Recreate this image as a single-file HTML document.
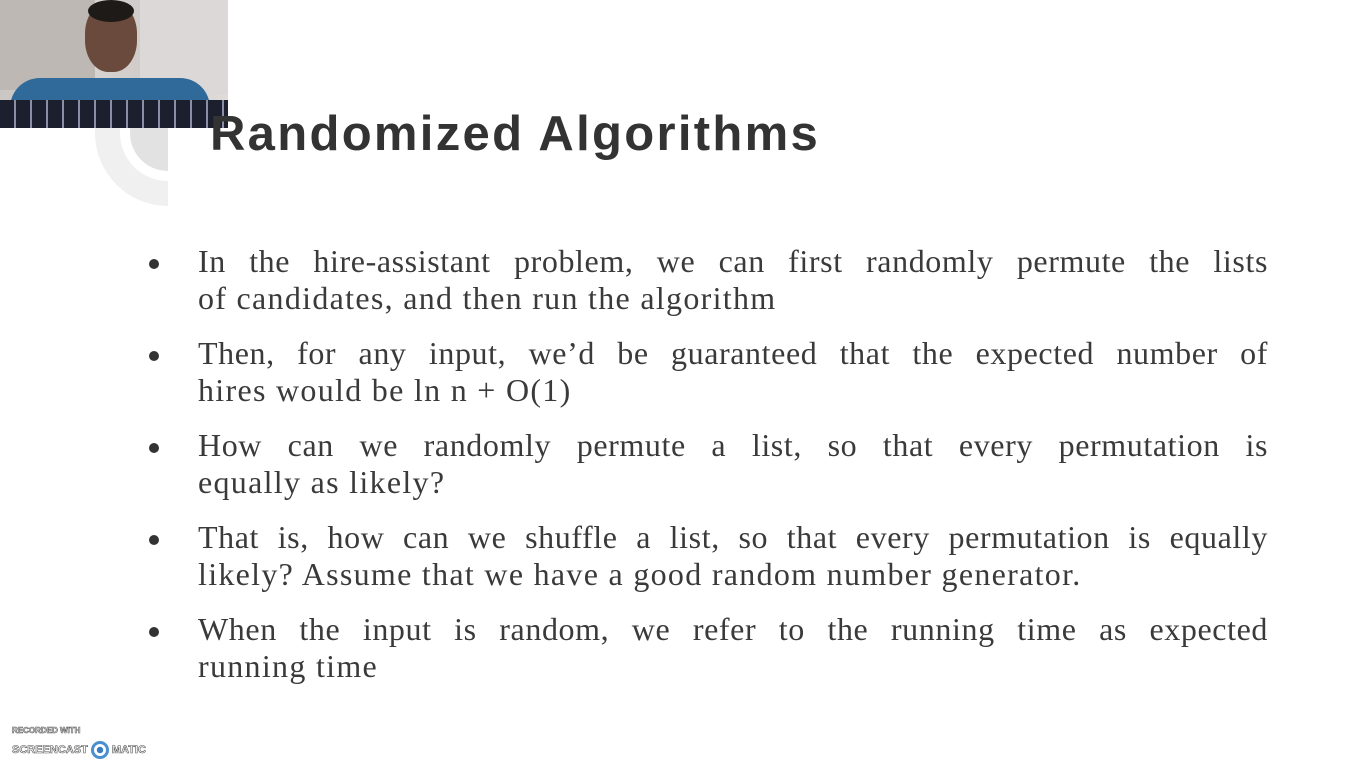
<!DOCTYPE html>
<html><head><style>
body{margin:0;width:1366px;height:768px;background:#fff;position:relative;overflow:hidden;font-family:"Liberation Serif",serif}
.cam{position:absolute;left:0;top:0;width:228px;height:128px;background:linear-gradient(90deg,#c9c6c4 0,#d8d4d2 40%,#cfcac8 65%,#e0dcda 100%);overflow:hidden}
.arc1{position:absolute;left:95px;top:60px;width:146px;height:146px;border-radius:50%;background:#f0f0f0}
.arc2{position:absolute;left:120px;top:85px;width:96px;height:96px;border-radius:50%;background:#fff}
.arc3{position:absolute;left:130px;top:95px;width:76px;height:76px;border-radius:50%;background:#e2e2e2}
.cov{position:absolute;left:168px;top:50px;width:120px;height:160px;background:#fff}
h1{position:absolute;left:210px;top:106px;margin:0;font:bold 49px "Liberation Sans",sans-serif;color:#333;letter-spacing:2.3px}
ul{position:absolute;left:198px;top:243px;width:1070px;margin:0;padding:0;list-style:none}
li{position:relative;font-size:32px;line-height:37px;color:#3a3a3a;margin-bottom:18px;letter-spacing:1.3px;white-space:nowrap}
li .j{text-align:justify;text-align-last:justify;letter-spacing:0.6px}
li:before{content:"";position:absolute;left:-49px;top:16px;width:10px;height:10px;border-radius:50%;background:#333}
.sc{position:absolute;left:12px;font:bold 9px "Liberation Sans",sans-serif;color:#fff;-webkit-text-stroke:0.6px #555}
</style></head><body>
<div class="arc1"></div><div class="arc2"></div><div class="arc3"></div><div class="cov"></div>
<div class="cam">
<div style="position:absolute;left:0;top:0;width:95px;height:90px;background:#bdb8b4"></div>
<div style="position:absolute;left:140px;top:0;width:88px;height:95px;background:#dcd8d8"></div>
<div style="position:absolute;left:85px;top:2px;width:52px;height:70px;border-radius:45%;background:#6a4a3c"></div>
<div style="position:absolute;left:88px;top:0;width:46px;height:22px;border-radius:50%;background:#1e1a18"></div>
<div style="position:absolute;left:10px;top:78px;width:200px;height:30px;border-radius:30px 30px 0 0;background:#2f6a9a"></div>
<div style="position:absolute;left:0;top:100px;width:228px;height:28px;background:repeating-linear-gradient(90deg,#1c1f2e 0 14px,#8a8fa8 14px 16px)"></div>
</div>
<h1>Randomized Algorithms</h1>
<ul>
<li><div class="j">In the hire-assistant problem, we can first randomly permute the lists</div><div>of candidates, and then run the algorithm</div></li>
<li><div class="j">Then, for any input, we’d be guaranteed that the expected number of</div><div>hires would be ln n + O(1)</div></li>
<li><div class="j">How can we randomly permute a list, so that every permutation is</div><div>equally as likely?</div></li>
<li><div class="j">That is, how can we shuffle a list, so that every permutation is equally</div><div>likely? Assume that we have a good random number generator.</div></li>
<li><div class="j">When the input is random, we refer to the running time as expected</div><div>running time</div></li>
</ul>
<div class="sc" style="top:726px;font-size:8px">RECORDED WITH</div>
<div class="sc" style="top:741px;font-size:11px">SCREENCAST <span style="display:inline-block;width:18px;height:18px;border-radius:50%;border:3px solid #4a8fd0;box-sizing:border-box;vertical-align:middle;background:radial-gradient(#3a7cc0 35%,#fff 40%)"></span> MATIC</div>
</body></html>
